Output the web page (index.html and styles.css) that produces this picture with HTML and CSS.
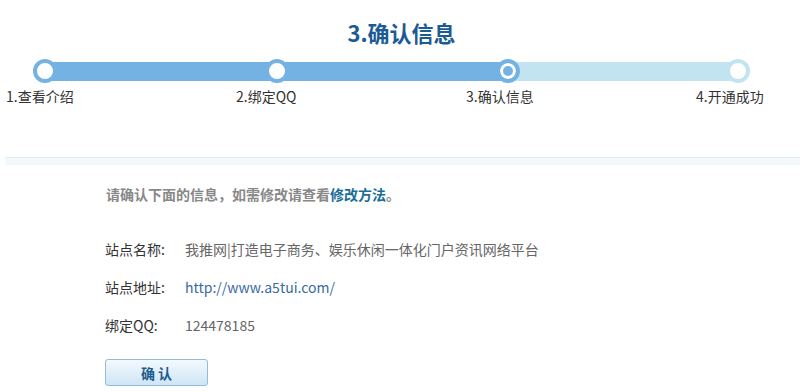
FILE: index.html
```html
<!DOCTYPE html>
<html>
<head>
  <meta charset="utf-8">
  <title>确认信息</title>
  <link rel="stylesheet" href="styles.css">
</head>
<body>
  <h1 class="title">3.确认信息</h1>

  <div class="steps">
    <div class="track">
      <div class="bar">
        <div class="bar-done"></div>
      </div>
      <span class="node done" style="left: 33px"></span>
      <span class="node done" style="left: 265px"></span>
      <span class="node current" style="left: 496px"></span>
      <span class="node todo" style="left: 726px"></span>
    </div>
    <div class="step-labels">
      <div>1.查看介绍</div>
      <div>2.绑定QQ</div>
      <div>3.确认信息</div>
      <div>4.开通成功</div>
    </div>
  </div>

  <div class="divider"></div>

  <div class="confirm">
    <p class="tip">请确认下面的信息，如需修改请查看<a href="#">修改方法</a>。</p>
    <dl class="info">
      <div class="row">
        <dt>站点名称:</dt>
        <dd>我推网|打造电子商务、娱乐休闲一体化门户资讯网络平台</dd>
      </div>
      <div class="row">
        <dt>站点地址:</dt>
        <dd><a href="#">http://www.a5tui.com/</a></dd>
      </div>
      <div class="row">
        <dt>绑定QQ:</dt>
        <dd>124478185</dd>
      </div>
    </dl>
    <button class="btn">确 认</button>
  </div>
</body>
</html>
```

FILE: styles.css
```css
body {
  margin: 0;
  font-family: "Noto Sans CJK SC", "Liberation Sans", sans-serif;
  color: #333;
  background: #fff;
}
.title {
  margin: 0;
  padding-top: 17px;
  text-align: center;
  font-size: 22px;
  line-height: 30px;
  font-weight: bold;
  color: #1b5a93;
}
.steps {
  margin-top: 12px;
}
.track {
  position: relative;
  height: 24px;
}
.bar {
  position: absolute;
  left: 45px;
  top: 3px;
  width: 693px;
  height: 19px;
  background: #c2e4f0;
}
.bar-done {
  width: 463px;
  height: 100%;
  background: #74b2e4;
}
.node {
  position: absolute;
  top: 0;
  width: 16px;
  height: 16px;
  border: 4px solid #74b2e4;
  border-radius: 50%;
  background: #fff;
}
.node.current {
  background: #74b2e4;
  box-shadow: inset 0 0 0 3px #fff;
}
.node.todo {
  border-color: #c2e4f0;
}
.step-labels {
  display: flex;
  margin-top: 4px;
  padding-left: 6px;
  font-size: 14px;
  line-height: 18px;
  color: #333;
}
.step-labels div {
  flex: none;
  width: 230px;
}
.step-labels div:last-child {
  width: auto;
}
.divider {
  margin: 52px 3px 0 5px;
  height: 7px;
  border-top: 1px solid #e4ebf0;
  background: #f3f8fc;
}
.confirm {
  padding-left: 105px;
}
.tip {
  margin: 19px 0 0 1px;
  font-size: 14px;
  line-height: 20px;
  font-weight: bold;
  color: #888;
}
.tip a {
  color: #1a6d98;
  text-decoration: none;
}
.info {
  margin: 35px 0 0;
}
.row {
  display: flex;
  font-size: 14px;
  line-height: 20px;
  margin-bottom: 18px;
}
.row dt {
  width: 80px;
  color: #333;
}
.row dd {
  margin: 0;
  color: #666;
}
.row dd a {
  color: #3a6aa3;
  text-decoration: none;
}
.btn {
  display: block;
  margin-top: 24px;
  width: 103px;
  height: 27px;
  padding: 0;
  border: 1px solid #93bcdc;
  border-radius: 3px;
  background: linear-gradient(#f3f9fe, #cfe5f6);
  font-family: inherit;
  font-size: 14px;
  font-weight: bold;
  color: #1f5b8d;
  cursor: pointer;
}
```
